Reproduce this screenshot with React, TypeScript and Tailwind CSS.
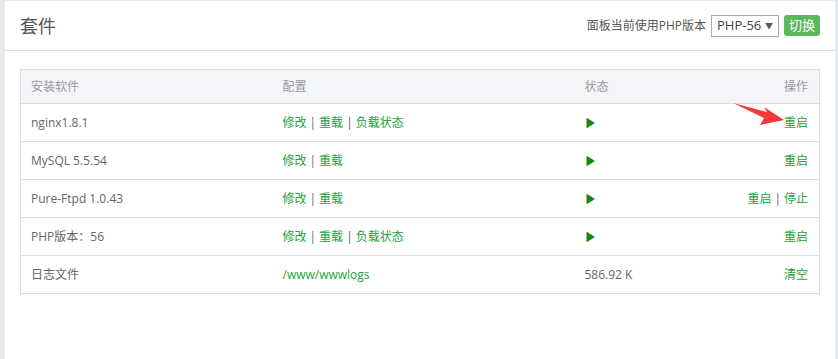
import React from 'react';

const rows = [
  { name: 'nginx1.8.1', cfg: ['修改', '重载', '负载状态'], status: 'run', ops: ['重启'] },
  { name: 'MySQL 5.5.54', cfg: ['修改', '重载'], status: 'run', ops: ['重启'] },
  { name: 'Pure-Ftpd 1.0.43', cfg: ['修改', '重载'], status: 'run', ops: ['重启', '停止'] },
  { name: 'PHP版本：56', cfg: ['修改', '重载', '负载状态'], status: 'run', ops: ['重启'] },
];

function PlayIcon() {
  return (
    <svg width="10" height="12" viewBox="0 0 10 12" className="block">
      <rect x="0" y="1" width="1" height="10" fill="#e8a33c" />
      <polygon points="1,1 9,6 1,11" fill="#0a8a1e" />
    </svg>
  );
}

function Links({ items }: { items: string[] }) {
  return (
    <span>
      {items.map((t, i) => (
        <React.Fragment key={t}>
          {i > 0 && <span className="text-[#666] px-[3px]">|</span>}
          <a className="text-[#20a53a] cursor-pointer">{t}</a>
        </React.Fragment>
      ))}
    </span>
  );
}

export default function App() {
  return (
    <div
      className="w-[838px] h-[359px] bg-[#e6e9ee] pl-[5px] pr-[3px] pt-[1px] overflow-hidden relative"
      style={{ fontFamily: '"Open Sans", "Noto Sans CJK SC", sans-serif' }}
    >
      <div className="bg-white h-full">
        {/* header */}
        <div className="h-[50px] border-b border-[#ddd] flex items-center justify-between pl-[15px] pr-[15px]">
          <h2 className="text-[18px] text-[#555] font-normal leading-none">套件</h2>
          <div className="flex items-center text-[12px] text-[#555]">
            <span className="mr-[5px]">面板当前使用PHP版本</span>
            <div className="w-[68px] h-[22px] border border-[#aaa] flex items-center justify-between pl-[5px] pr-[5px] text-[13px] text-[#444] bg-white">
              <span>PHP-56</span>
              <span className="text-[8px] text-[#555]">▼</span>
            </div>
            <button className="ml-[5px] h-[21px] px-[5px] rounded-[3px] bg-[#5cb85c] text-white text-[13px] leading-none">
              切换
            </button>
          </div>
        </div>

        {/* table */}
        <div className="px-[15px] pt-[18px]">
          <table className="w-[800px] border border-[#ddd] text-[12px] text-[#666] border-collapse">
            <thead>
              <tr className="bg-[#f4f5f9] h-[34px] text-[#999]">
                <th className="font-normal text-left pl-[10px] w-[252px]">安装软件</th>
                <th className="font-normal text-left pl-[10px] w-[302px]">配置</th>
                <th className="font-normal text-left pl-[10px]">状态</th>
                <th className="font-normal text-right pr-[11px]">操作</th>
              </tr>
            </thead>
            <tbody>
              {rows.map((r) => (
                <tr key={r.name} className="h-[38px] border-t border-[#ddd]">
                  <td className="pl-[10px]">{r.name}</td>
                  <td className="pl-[10px]"><Links items={r.cfg} /></td>
                  <td className="pl-[11px]"><PlayIcon /></td>
                  <td className="pr-[11px] text-right"><Links items={r.ops} /></td>
                </tr>
              ))}
              <tr className="h-[38px] border-t border-[#ddd]">
                <td className="pl-[10px]">日志文件</td>
                <td className="pl-[10px] text-[#20a53a]">/www/wwwlogs</td>
                <td className="pl-[10px]">586.92 K</td>
                <td className="pr-[11px] text-right"><a className="text-[#20a53a]">清空</a></td>
              </tr>
            </tbody>
          </table>
        </div>
      </div>

      {/* annotation arrow */}
      <svg className="absolute left-[730px] top-[100px]" width="60" height="30" viewBox="0 0 60 30">
        <polygon points="3,3 37,12 34,7 54,20 30,25 34,18" fill="#f23a3a" />
      </svg>
    </div>
  );
}
